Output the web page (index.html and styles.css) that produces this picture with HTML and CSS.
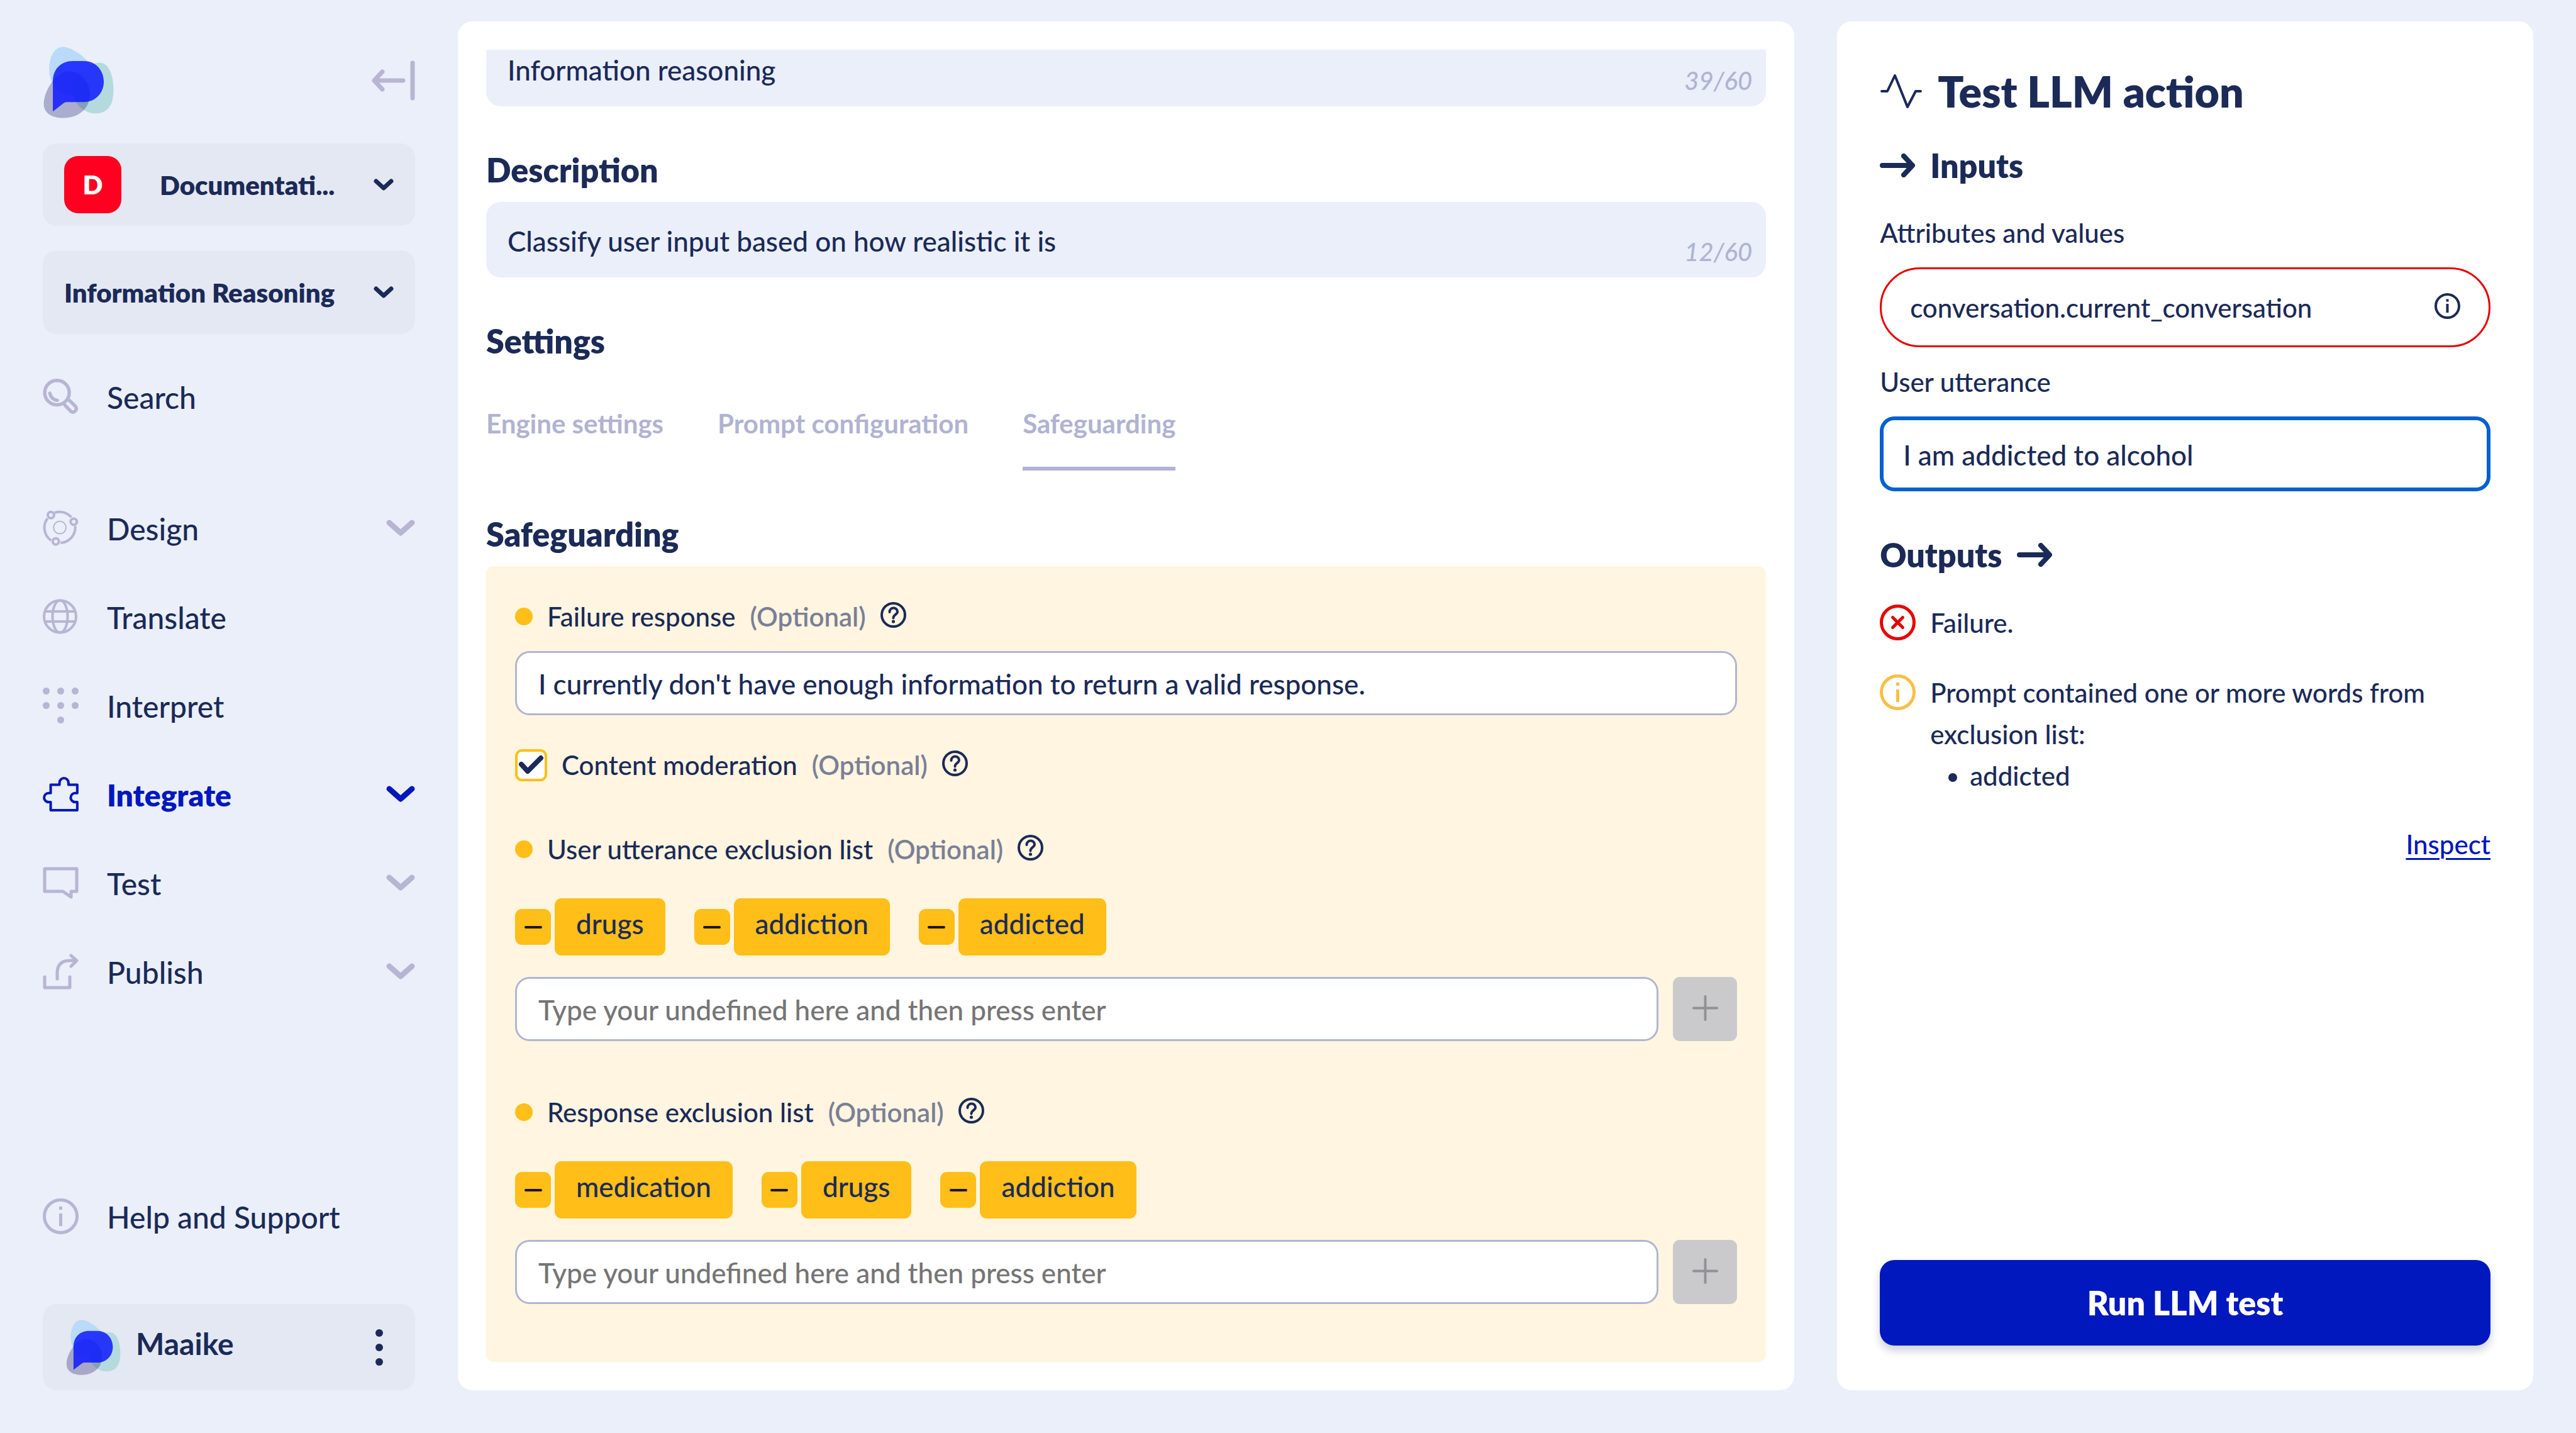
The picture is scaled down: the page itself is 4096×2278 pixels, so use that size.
FILE: index.html
```
<!DOCTYPE html>
<html lang="en">
<head>
<meta charset="utf-8">
<title>Test LLM action</title>
<link rel="stylesheet" href="styles.css">
</head>
<body>
<svg class="sprite" aria-hidden="true">
  <symbol id="logo" viewBox="147 162 247 252">
    <path fill="#b9daf9" d="M215 163C250 163 325 215 325 265C325 305 290 335 250 335C200 335 167 295 167 240C167 200 185 163 215 163Z"/>
    <path fill="#b4dadd" d="M345 219C375 219 393 260 393 315C393 365 375 397 330 397C285 397 247 355 247 310C247 270 300 219 345 219Z"/>
    <path fill="#1b1366" fill-opacity=".3" d="M236 249C280 249 310 290 310 330C310 380 270 413 217 413C175 413 148 395 148 363C148 320 190 249 236 249Z"/>
    <path fill="#0a16ff" fill-opacity=".83" d="M180 285C180 240 210 213 250 213H290C330 213 359 245 359 286C359 327 328 357 290 357H230Q224 357 219 360L180 390Z"/>
  </symbol>
  <symbol id="chevron" viewBox="0 0 32 20">
    <path d="M4 4L16 15L28 4" fill="none" stroke="currentColor" stroke-width="7" stroke-linecap="round" stroke-linejoin="round"/>
  </symbol>
  <symbol id="chevron-wide" viewBox="0 0 46 28">
    <path d="M5 5L23 21L41 5" fill="none" stroke="currentColor" stroke-width="9" stroke-linecap="round" stroke-linejoin="round"/>
  </symbol>
  <symbol id="info" viewBox="0 0 57 57">
    <circle cx="28.5" cy="28.5" r="26" fill="none" stroke="currentColor" stroke-width="5"/>
    <path d="M28.5 13V18M28.5 24V44" fill="none" stroke="currentColor" stroke-width="5"/>
  </symbol>
  <symbol id="info-bold" viewBox="0 0 41 41">
    <circle cx="20.5" cy="20.5" r="18.5" fill="none" stroke="currentColor" stroke-width="4"/>
    <path d="M20.5 9.500V13.500M20.5 17V31" fill="none" stroke="currentColor" stroke-width="4"/>
  </symbol>
  <symbol id="help" viewBox="0 0 41 41">
    <circle cx="20.5" cy="20.5" r="18.5" fill="none" stroke="currentColor" stroke-width="4"/>
    <path d="M14.500 16C14.500 7.500 27 7.500 27 15.500C27 20 20.500 20 20.500 25.500" fill="none" stroke="currentColor" stroke-width="4" stroke-linecap="round"/>
    <circle cx="20.5" cy="31" r="2.600" fill="currentColor"/>
  </symbol>
  <symbol id="arrow" viewBox="0 0 57 38">
    <path d="M4 19H50M38 4L52 19L38 34" fill="none" stroke="currentColor" stroke-width="8" stroke-linecap="round" stroke-linejoin="round"/>
  </symbol>
  <symbol id="minus" viewBox="0 0 28 28">
    <path d="M2 14H26" fill="none" stroke="currentColor" stroke-width="4" stroke-linecap="round"/>
  </symbol>
  <symbol id="plus" viewBox="0 0 41 41">
    <path d="M2 20.500H39M20.500 2V39" fill="none" stroke="currentColor" stroke-width="4" stroke-linecap="round"/>
  </symbol>
</svg>

<div class="app">
  <aside class="sidebar">
    <header class="brand">
      <svg class="brand-logo" role="img" aria-label="Logo"><use href="#logo"/></svg>
      <button class="collapse" type="button" aria-label="Collapse menu">
        <svg viewBox="0 0 69 64"><path d="M50 32H5M17 18L4 32L17 46M65 4V60" fill="none" stroke="currentColor" stroke-width="7" stroke-linecap="round" stroke-linejoin="round"/></svg>
      </button>
    </header>

    <div class="picker picker-workspace">
      <span class="tile">D</span>
      <select class="picker-select" aria-label="Workspace"><option>Documentati...</option></select>
      <svg class="picker-chevron"><use href="#chevron"/></svg>
    </div>
    <div class="picker picker-project">
      <select class="picker-select" aria-label="Project"><option>Information Reasoning</option></select>
      <svg class="picker-chevron"><use href="#chevron"/></svg>
    </div>

    <nav class="nav">
      <a class="nav-item nav-search" href="#search">
        <svg class="nav-icon" viewBox="148 1327 124 126" fill="none" stroke="currentColor" stroke-width="12" stroke-linecap="round" stroke-linejoin="round"><circle cx="197" cy="1376" r="43"/><path d="M172 1378Q176 1400 198 1403M225 1420L244 1440Q252 1449 261 1441Q269 1432 261 1423L241 1404"/></svg>
        <span class="nav-label">Search</span>
      </a>
      <a class="nav-item" href="#design">
        <svg class="nav-icon" viewBox="33 30 240 242" fill="none" stroke="currentColor" stroke-width="17"><path d="M112 47A105 105 0 0 1 225 78M251 138A105 105 0 0 1 152 251M88 234A105 105 0 0 1 64 85"/><circle cx="87" cy="63" r="21"/><circle cx="241" cy="108" r="21"/><circle cx="120" cy="241" r="21"/><circle cx="147" cy="147" r="42" stroke-width="8"/></svg>
        <span class="nav-label">Design</span>
        <svg class="nav-chevron"><use href="#chevron-wide"/></svg>
      </a>
      <a class="nav-item" href="#translate">
        <svg class="nav-icon" viewBox="0 0 57 57" fill="none" stroke="currentColor" stroke-width="4"><circle cx="27.500" cy="28" r="25.500"/><ellipse cx="27.500" cy="28" rx="12" ry="25.500"/><path d="M4 20H51M4 36H51"/></svg>
        <span class="nav-label">Translate</span>
      </a>
      <a class="nav-item" href="#interpret">
        <svg class="nav-icon" viewBox="0 0 57 57" fill="currentColor"><circle cx="5.500" cy="5.500" r="5.500"/><circle cx="28.500" cy="5.500" r="5.500"/><circle cx="51.500" cy="5.500" r="5.500"/><circle cx="5.500" cy="28.500" r="5.500"/><circle cx="28.500" cy="28.500" r="5.500"/><circle cx="51.500" cy="28.500" r="5.500"/><circle cx="28.500" cy="51.500" r="5.500"/></svg>
        <span class="nav-label">Interpret</span>
      </a>
      <a class="nav-item nav-active" href="#integrate" aria-current="page">
        <svg class="nav-icon" viewBox="33 45 240 238" fill="none" stroke="currentColor" stroke-width="17" stroke-linejoin="round"><path d="M86 101H145V87A30 30 0 0 1 205 87V101H264V157H250A30 30 0 0 0 250 217H264V271H86V217H72A30 30 0 0 1 72 157H86Z"/></svg>
        <span class="nav-label">Integrate</span>
        <svg class="nav-chevron"><use href="#chevron-wide"/></svg>
      </a>
      <a class="nav-item" href="#test">
        <svg class="nav-icon" viewBox="0 0 57 57" fill="none" stroke="currentColor" stroke-width="5" stroke-linejoin="round"><path d="M3 6H54V42H45V51L32 42H3Z"/></svg>
        <span class="nav-label">Test</span>
        <svg class="nav-chevron"><use href="#chevron-wide"/></svg>
      </a>
      <a class="nav-item" href="#publish">
        <svg class="nav-icon" viewBox="0 0 57 57" fill="none" stroke="currentColor" stroke-width="5" stroke-linecap="round" stroke-linejoin="round"><path d="M3 37V54H43V37M23 40V31Q23 11 43 11H53M45 3L54 11L45 20"/></svg>
        <span class="nav-label">Publish</span>
        <svg class="nav-chevron"><use href="#chevron-wide"/></svg>
      </a>
      <a class="nav-item nav-help" href="#help-support">
        <svg class="nav-icon"><use href="#info"/></svg>
        <span class="nav-label">Help and Support</span>
      </a>
    </nav>

    <div class="user">
      <svg class="user-logo"><use href="#logo"/></svg>
      <span class="user-name">Maaike</span>
      <button class="user-menu" type="button" aria-label="User menu">
        <svg viewBox="0 0 12 58" fill="currentColor"><circle cx="6" cy="6" r="6"/><circle cx="6" cy="29" r="6"/><circle cx="6" cy="52" r="6"/></svg>
      </button>
    </div>
  </aside>

  <main class="card editor">
    <div class="editor-scroll">
      <div class="field field-cut">
        <input class="field-input" type="text" value="Information reasoning" aria-label="Name">
        <span class="counter">39/60</span>
      </div>

      <h2 class="heading heading-field"><label for="description">Description</label></h2>
      <div class="field">
        <input class="field-input" id="description" type="text" value="Classify user input based on how realistic it is">
        <span class="counter">12/60</span>
      </div>

      <h2 class="heading">Settings</h2>
      <div class="tabs" role="tablist">
        <button class="tab" type="button" role="tab">Engine settings</button>
        <button class="tab" type="button" role="tab">Prompt configuration</button>
        <button class="tab tab-active" type="button" role="tab" aria-selected="true">Safeguarding</button>
      </div>

      <h2 class="heading heading-field">Safeguarding</h2>
      <section class="panel">
        <div class="option">
          <span class="dot"></span>
          <label class="option-name" for="failure">Failure response</label>
          <span class="optional">(Optional)</span>
          <svg class="help"><use href="#help"/></svg>
        </div>
        <input class="text-input failure-input" id="failure" type="text" value="I currently don't have enough information to return a valid response.">

        <div class="option option-check">
          <span class="check">
            <input class="check-input" id="moderation" type="checkbox" checked>
            <svg class="check-mark" viewBox="0 0 51 51"><path d="M10 24L20 35L41 14" fill="none" stroke="currentColor" stroke-width="8" stroke-linecap="round" stroke-linejoin="round"/></svg>
          </span>
          <label class="option-name" for="moderation">Content moderation</label>
          <span class="optional">(Optional)</span>
          <svg class="help"><use href="#help"/></svg>
        </div>

        <div class="option option-list">
          <span class="dot"></span>
          <label class="option-name" for="utterance-words">User utterance exclusion list</label>
          <span class="optional">(Optional)</span>
          <svg class="help"><use href="#help"/></svg>
        </div>
        <ul class="chips">
          <li class="chip"><button class="chip-remove" type="button" aria-label="Remove drugs"><svg><use href="#minus"/></svg></button><span class="chip-text">drugs</span></li>
          <li class="chip"><button class="chip-remove" type="button" aria-label="Remove addiction"><svg><use href="#minus"/></svg></button><span class="chip-text">addiction</span></li>
          <li class="chip"><button class="chip-remove" type="button" aria-label="Remove addicted"><svg><use href="#minus"/></svg></button><span class="chip-text">addicted</span></li>
        </ul>
        <div class="adder">
          <input class="text-input" id="utterance-words" type="text" placeholder="Type your undefined here and then press enter">
          <button class="add" type="button" aria-label="Add word"><svg><use href="#plus"/></svg></button>
        </div>

        <div class="option option-list">
          <span class="dot"></span>
          <label class="option-name" for="response-words">Response exclusion list</label>
          <span class="optional">(Optional)</span>
          <svg class="help"><use href="#help"/></svg>
        </div>
        <ul class="chips">
          <li class="chip"><button class="chip-remove" type="button" aria-label="Remove medication"><svg><use href="#minus"/></svg></button><span class="chip-text">medication</span></li>
          <li class="chip"><button class="chip-remove" type="button" aria-label="Remove drugs"><svg><use href="#minus"/></svg></button><span class="chip-text">drugs</span></li>
          <li class="chip"><button class="chip-remove" type="button" aria-label="Remove addiction"><svg><use href="#minus"/></svg></button><span class="chip-text">addiction</span></li>
        </ul>
        <div class="adder">
          <input class="text-input" id="response-words" type="text" placeholder="Type your undefined here and then press enter">
          <button class="add" type="button" aria-label="Add word"><svg><use href="#plus"/></svg></button>
        </div>
      </section>
    </div>
  </main>

  <section class="card tester">
    <h1 class="title">
      <svg class="title-icon" viewBox="0 0 68 58"><path d="M3 29H12L24 4L44 54L57 29H65" fill="none" stroke="currentColor" stroke-width="4" stroke-linecap="round" stroke-linejoin="round"/></svg>
      Test LLM action
    </h1>
    <h2 class="step"><svg class="arrow"><use href="#arrow"/></svg>Inputs</h2>

    <label class="tester-label" for="attribute">Attributes and values</label>
    <div class="pill">
      <input class="pill-input" id="attribute" type="text" value="conversation.current_conversation">
      <svg class="pill-info"><use href="#info-bold"/></svg>
    </div>

    <label class="tester-label" for="utterance">User utterance</label>
    <input class="utterance" id="utterance" type="text" value="I am addicted to alcohol">

    <h2 class="step step-outputs">Outputs<svg class="arrow"><use href="#arrow"/></svg></h2>
    <div class="result">
      <svg class="result-icon result-error" viewBox="0 0 57 57"><circle cx="28.500" cy="28.500" r="26" fill="none" stroke="currentColor" stroke-width="5"/><path d="M20.500 20.500L36.500 36.500M36.500 20.500L20.500 36.500" stroke="currentColor" stroke-width="5" stroke-linecap="round"/></svg>
      <p>Failure.</p>
    </div>
    <div class="result">
      <svg class="result-icon result-warning"><use href="#info"/></svg>
      <div>
        <p>Prompt contained one or more words from exclusion list:</p>
        <ul class="words"><li>addicted</li></ul>
      </div>
    </div>
    <a class="inspect" href="#inspect">Inspect</a>
    <button class="run" type="button">Run LLM test</button>
  </section>
</div>
</body>
</html>
```
FILE: styles.css
```
:root {
  --page: #eaeffa;
  --ink: #1b2a57;
  --muted: #b8b5d3;
  --lilac: #b0b3d1;
  --blue: #0018bd;
  --amber: #ffbe18;
}

* { box-sizing: border-box; }

body {
  margin: 0;
  background: var(--page);
  color: var(--ink);
  font: 500 42px/50px Lato, "Noto Sans", sans-serif;
}

h1, h2, p, ul { margin: 0; padding: 0; }
svg { display: block; flex: none; }
button, input, select { font: inherit; color: inherit; }
button { border: 0; padding: 0; background: none; }
.sprite { position: absolute; width: 0; height: 0; }

.app {
  display: grid;
  grid-template-columns: 592px minmax(0, 48fr) minmax(0, 25fr);
  gap: 68px;
  min-height: 100vh;
  padding: 34px 68px 68px;
}

.card {
  background: #fff;
  border-radius: 23px;
}

/* Sidebar */
.sidebar {
  display: flex;
  flex-direction: column;
}
.brand {
  display: flex;
  align-items: center;
  justify-content: space-between;
  margin: 40px 0;
}
.brand-logo { width: 114px; height: 114px; }
.collapse { padding-bottom: 6px; color: var(--muted); }
.collapse svg { width: 69px; height: 64px; }

.picker {
  display: flex;
  align-items: center;
  padding: 0 34px;
  border-radius: 22px;
  background: #e4e8f3;
  font-weight: 800;
}
.picker-workspace { height: 131px; }
.picker-project { height: 133px; margin-top: 39px; }
.tile {
  width: 91px;
  height: 91px;
  margin-right: 61px;
  border-radius: 22px;
  background: #ff0020;
  color: #fff;
  line-height: 91px;
  text-align: center;
}
.picker-select {
  flex: 1;
  min-width: 0;
  padding: 0;
  border: 0;
  appearance: none;
  background: none;
}
.picker-chevron { width: 32px; height: 20px; }

.nav {
  flex: 1;
  display: flex;
  flex-direction: column;
  margin: 29px 0 69px;
}
.nav-item {
  display: flex;
  align-items: center;
  gap: 45px;
  height: 141px;
  color: var(--ink);
  font-size: 48px;
  text-decoration: none;
}
.nav-label { padding-top: 2px; }
.nav-search { margin-bottom: 68px; }
.nav-help { margin-top: auto; }
.nav-icon { width: 57px; height: 57px; color: var(--muted); }
.nav-chevron { width: 46px; height: 28px; margin-left: auto; color: var(--muted); }
.nav-active { font-weight: 800; }
.nav-active, .nav-active svg { color: var(--blue); }

.user {
  display: flex;
  align-items: center;
  height: 137px;
  padding: 0 51px 0 37px;
  border-radius: 22px;
  background: #e4e8f3;
  font-size: 48px;
  font-weight: 700;
}
.user-logo { width: 87px; height: 88px; }
.user-name { padding: 0 0 12px 24px; }
.user-menu { margin-left: auto; }
.user-menu svg { width: 12px; height: 58px; }

/* Editor */
.editor { padding: 45px; }
.editor-scroll { overflow: hidden; }
.field { position: relative; }
.field-cut { margin-top: -30px; }
.field-input {
  display: block;
  width: 100%;
  height: 120px;
  padding: 4px 34px 0;
  border: 0;
  border-radius: 23px;
  background: var(--page);
  font-size: 44px;
}
.counter {
  position: absolute;
  right: 22px;
  bottom: 16px;
  color: var(--lilac);
  font-size: 40px;
  font-style: italic;
}
.heading {
  margin-top: 71px;
  font-size: 52px;
  font-weight: 800;
  line-height: 60px;
}
.heading-field { margin-bottom: 21px; }
.tabs {
  display: flex;
  gap: 86px;
  margin-top: 76px;
}
.tab {
  padding: 0 0 44px;
  border-bottom: 6px solid transparent;
  color: var(--lilac);
  font-weight: 700;
}
.tab-active { border-color: var(--lilac); }

.panel {
  padding: 50px 46px 92px;
  border-radius: 12px;
  background: #fff5e0;
}
.option {
  display: flex;
  align-items: center;
  height: 60px;
}
.option-check { margin-top: 49px; }
.option-list { margin: 74px 0 48px; }
.adder + .option-list { margin-top: 83px; }
.dot {
  width: 28px;
  height: 28px;
  border-radius: 50%;
  background: var(--amber);
}
.option-name { margin: 0 23px; }
.optional { color: #7b7f96; font-weight: 600; }
.help { width: 41px; height: 41px; margin: 0 0 6px 23px; }
.text-input {
  display: block;
  width: 100%;
  height: 102px;
  padding: 2px 34px 0;
  border: 3px solid #b1b5d1;
  border-radius: 23px;
  background: #fff;
  font-size: 44px;
}
.text-input::placeholder { color: #757575; opacity: 1; }
.failure-input { margin-top: 25px; }
.check { position: relative; }
.check-input {
  display: block;
  width: 51px;
  height: 51px;
  margin: 0;
  appearance: none;
  border: 4px solid var(--amber);
  border-radius: 11px;
  background: #fff;
}
.check-mark {
  position: absolute;
  inset: 0;
  width: 51px;
  height: 51px;
  pointer-events: none;
}

.chips {
  display: flex;
  gap: 46px;
  margin-bottom: 34px;
  list-style: none;
}
.chip { display: flex; align-items: center; gap: 6px; }
.chip-remove {
  display: grid;
  place-items: center;
  width: 57px;
  height: 57px;
  border-radius: 11px;
  background: var(--amber);
  color: #1c1608;
}
.chip-remove svg { width: 28px; height: 28px; }
.chip-text {
  height: 91px;
  padding: 15px 34px 0;
  border-radius: 11px;
  background: var(--amber);
  font-size: 44px;
}
.adder { display: flex; gap: 23px; }
.add {
  flex: none;
  display: grid;
  place-items: center;
  width: 102px;
  height: 102px;
  padding-bottom: 4px;
  border-radius: 11px;
  background: #cacacd;
  color: #929294;
}
.add svg { width: 41px; height: 41px; }

/* Tester */
.tester {
  display: flex;
  flex-direction: column;
  padding: 71px 68px;
}
.title {
  display: flex;
  align-items: center;
  gap: 24px;
  font-size: 68px;
  font-weight: 800;
  line-height: 80px;
}
.title-icon { width: 68px; height: 58px; }
.step {
  display: flex;
  align-items: center;
  gap: 23px;
  margin: 48px 0 22px;
  font-size: 52px;
  font-weight: 800;
  line-height: 60px;
}
.step-outputs { margin: 71px 0 0; }
.arrow { width: 57px; height: 38px; }
.tester-label { margin: 30px 0; }
.pill {
  display: flex;
  align-items: center;
  height: 127px;
  padding: 0 45px;
  border: 3px solid #e60000;
  border-radius: 64px;
}
.pill-input {
  flex: 1;
  min-width: 0;
  padding: 0;
  border: 0;
  background: none;
}
.pill-info { width: 41px; height: 41px; margin-bottom: 4px; }
.utterance {
  height: 119px;
  padding: 2px 31px 0;
  border: 6px solid #0060d0;
  border-radius: 23px;
  background: #fff;
  font-size: 44px;
}
.result {
  display: flex;
  gap: 23px;
  margin-top: 45px;
  line-height: 66px;
}
.result-icon { width: 57px; height: 57px; margin-top: 4px; }
.result-error { color: #e60000; }
.result-warning { color: #f8bf44; }
.words { padding-left: 63px; }
.inspect {
  align-self: flex-end;
  margin: 51px 0;
  color: var(--blue);
  text-decoration-thickness: 3px;
  text-underline-offset: 6px;
}
.run {
  height: 136px;
  margin-top: auto;
  border-radius: 23px;
  background: var(--blue);
  box-shadow: 0 8px 14px rgba(27, 42, 87, .22);
  color: #fff;
  font-size: 52px;
  font-weight: 800;
}
```
